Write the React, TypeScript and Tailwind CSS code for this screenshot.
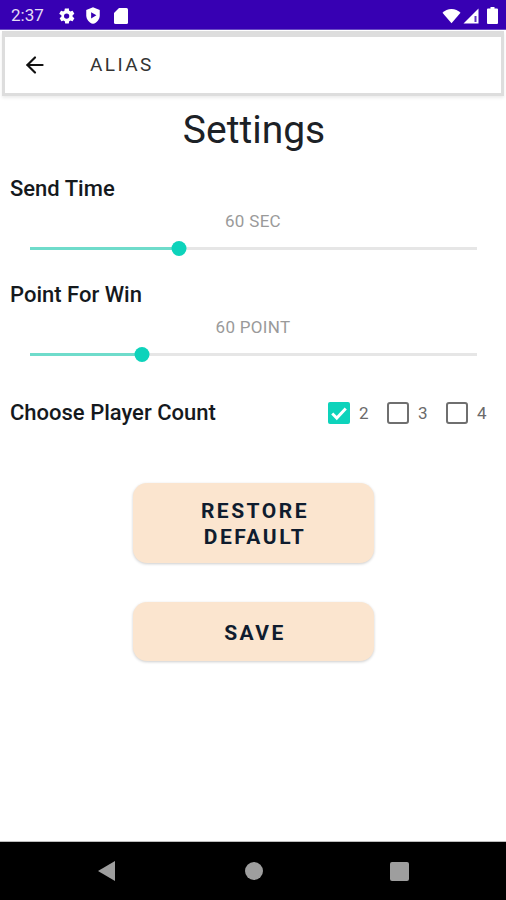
import React from 'react';
import { ArrowLeft } from 'lucide-react';

const StatusBar = () => (
  <div className="h-[30px] bg-[#3700b3] border-b border-[#6a4cc4] flex items-center justify-between pl-[11px] pr-[8px] pt-[2px] shrink-0">
    <div className="flex items-center">
      <span className="text-[17px] text-[#e4dcf5] w-[47px]">2:37</span>
      <svg width="18" height="18" viewBox="0 0 24 24" fill="#fff" className="mr-[8px]">
        <path d="M19.4 13c.04-.32.1-.66.1-1s-.06-.68-.1-1l2.1-1.65a.5.5 0 0 0 .12-.64l-2-3.46a.5.5 0 0 0-.61-.22l-2.49 1a7.3 7.3 0 0 0-1.69-.98l-.38-2.65A.49.49 0 0 0 13.5 2h-4a.49.49 0 0 0-.49.42l-.38 2.65c-.61.25-1.17.59-1.69.98l-2.49-1a.5.5 0 0 0-.61.22l-2 3.46a.5.5 0 0 0 .12.64L4.57 11c-.04.32-.07.66-.07 1s.03.68.07 1l-2.11 1.65a.5.5 0 0 0-.12.64l2 3.46c.12.22.39.3.61.22l2.49-1c.52.4 1.08.73 1.69.98l.38 2.65c.03.24.24.42.49.42h4c.25 0 .46-.18.49-.42l.38-2.65c.61-.25 1.17-.59 1.69-.98l2.49 1c.22.08.49 0 .61-.22l2-3.46a.5.5 0 0 0-.12-.64L19.4 13zM11.5 15.5a3.5 3.5 0 1 1 0-7 3.5 3.5 0 0 1 0 7z" />
      </svg>
      <svg width="18" height="19" viewBox="0 0 24 24" className="mr-[11px]">
        <path fill="#fff" d="M12 1 3 4.500v7c0 5.500 3.800 10.300 9 11.500 5.200-1.200 9-6 9-11.500v-7L12 1z" />
        <path fill="#3700b3" d="M9.500 7.500v8.500l7-4.250z" />
      </svg>
      <svg width="16" height="18" viewBox="0 0 16 18" fill="#fff">
        <path d="M6 1h7.500A1.500 1.500 0 0 1 15 2.500v13a1.500 1.500 0 0 1-1.500 1.500h-11A1.500 1.500 0 0 1 1 15.500V6l5-5z" />
      </svg>
    </div>
    <div className="flex items-center gap-[2px]">
      <svg width="19" height="16" viewBox="0 0 20 16" fill="#fff">
        <path d="M10 15.500 0.500 4.500C3 2 6.300 0.500 10 0.500s7 1.500 9.500 4L10 15.500z" />
      </svg>
      <svg width="16" height="16" viewBox="0 0 16 16">
        <path fill="#fff" d="M15.500 0.500v15H0.500z" />
        <path fill="#3700b3" d="M11.500 8h2v6h-2z" opacity="0.8" />
      </svg>
      <svg width="11" height="17" viewBox="0 0 11 17" fill="#fff" className="ml-[6px]">
        <path d="M3.500 0h4v1.500H10a1 1 0 0 1 1 1V16a1 1 0 0 1-1 1H1a1 1 0 0 1-1-1V2.500a1 1 0 0 1 1-1h2.500z" />
      </svg>
    </div>
  </div>
);

const SettingSlider = ({ label, value, percent }: { label: string; value: string; percent: number }) => (
  <div>
    <div className="text-[22px] leading-[24px] font-medium text-[#15191d] pl-[10px]">{label}</div>
    <div className="text-[17px] leading-[20px] tracking-[0.3px] text-[#9a9a9a] text-center mt-[10px]">{value}</div>
    <div className="ml-[30px] mr-[29px] mt-[9px] h-[16px] relative flex items-center">
      <div className="h-[3px] w-full bg-[#e6e6e6] flex">
        <div className="h-full bg-[#6fdccb]" style={{ width: `${percent}%` }} />
      </div>
      <div
        className="absolute w-[15px] h-[15px] rounded-full bg-[#0dd3bb] -translate-x-1/2"
        style={{ left: `${percent}%` }}
      />
    </div>
  </div>
);

const PlayerOption = ({ n, checked }: { n: number; checked?: boolean }) => (
  <div className="flex items-center">
    {checked ? (
      <div className="w-[22px] h-[22px] rounded-[2px] bg-[#0dd3bb] flex items-center justify-center">
        <svg width="18" height="18" viewBox="0 0 16 16" fill="none" stroke="#fff" strokeWidth="2.600">
          <path d="M2 8.500l4 4 8-8.500" />
        </svg>
      </div>
    ) : (
      <div className="w-[22px] h-[22px] rounded-[3px] border-[2px] border-[#6f6f6f]" />
    )}
    <span className="text-[17px] leading-[22px] text-[#6a6a6a] ml-[9px] w-[10px]">{n}</span>
  </div>
);

const PeachButton = ({ children, height }: { children: React.ReactNode; height: string }) => (
  <button
    className={`w-[241px] ${height} pt-[2px] pl-[4px] rounded-[14px] bg-[#fbe5cf] shadow-[0_1px_3px_rgba(0,0,0,0.2)] text-[21px] leading-[26px] font-bold tracking-[2.500px] text-[#0f1c2e] text-center`}
  >
    {children}
  </button>
);

export default function App() {
  return (
    <div className="w-[506px] h-[900px] bg-white flex flex-col font-['Roboto',sans-serif] overflow-hidden">
      <StatusBar />
      <div className="mt-[1px] mx-[2px] h-[65px] shrink-0 border-x-[3px] border-t-[6px] border-b-[3px] border-[#dddddd] bg-white flex items-center shadow-[0_2px_3px_rgba(0,0,0,0.08)]">
        <ArrowLeft className="w-[26px] h-[26px] text-[#111] ml-[17px]" strokeWidth={2} />
        <span className="text-[19px] text-[#333] tracking-[2.400px] ml-[42px]">ALIAS</span>
      </div>

      <h1 className="text-[39px] leading-[46px] text-[#1c2126] text-center pl-[2px] mt-[11px]">Settings</h1>

      <div className="mt-[24px] flex flex-col gap-[27px]">
        <SettingSlider label="Send Time" value="60 SEC" percent={33.400} />
        <SettingSlider label="Point For Win" value="60 POINT" percent={25} />
      </div>

      <div className="mt-[36px] flex items-center justify-between pl-[10px] pr-[19px]">
        <span className="text-[22px] leading-[30px] font-medium text-[#15191d]">Choose Player Count</span>
        <div className="flex gap-[18px]">
          <PlayerOption n={2} checked />
          <PlayerOption n={3} />
          <PlayerOption n={4} />
        </div>
      </div>

      <div className="mt-[55px] flex flex-col items-center gap-[39px]">
        <PeachButton height="h-[80px]">
          RESTORE
          <br />
          DEFAULT
        </PeachButton>
        <PeachButton height="h-[59px]">SAVE</PeachButton>
      </div>

      <div className="mt-auto h-[59px] bg-black border-t border-[#bdbdbd] flex items-center shrink-0 pl-[97px] pr-[97px] justify-between">
        <svg width="20" height="22" viewBox="0 0 20 22" fill="#9e9e9e">
          <path d="M18 1v20L1 11z" />
        </svg>
        <div className="w-[18px] h-[18px] rounded-full bg-[#9e9e9e]" />
        <div className="w-[19px] h-[19px] rounded-[2px] bg-[#9e9e9e]" />
      </div>
    </div>
  );
}
